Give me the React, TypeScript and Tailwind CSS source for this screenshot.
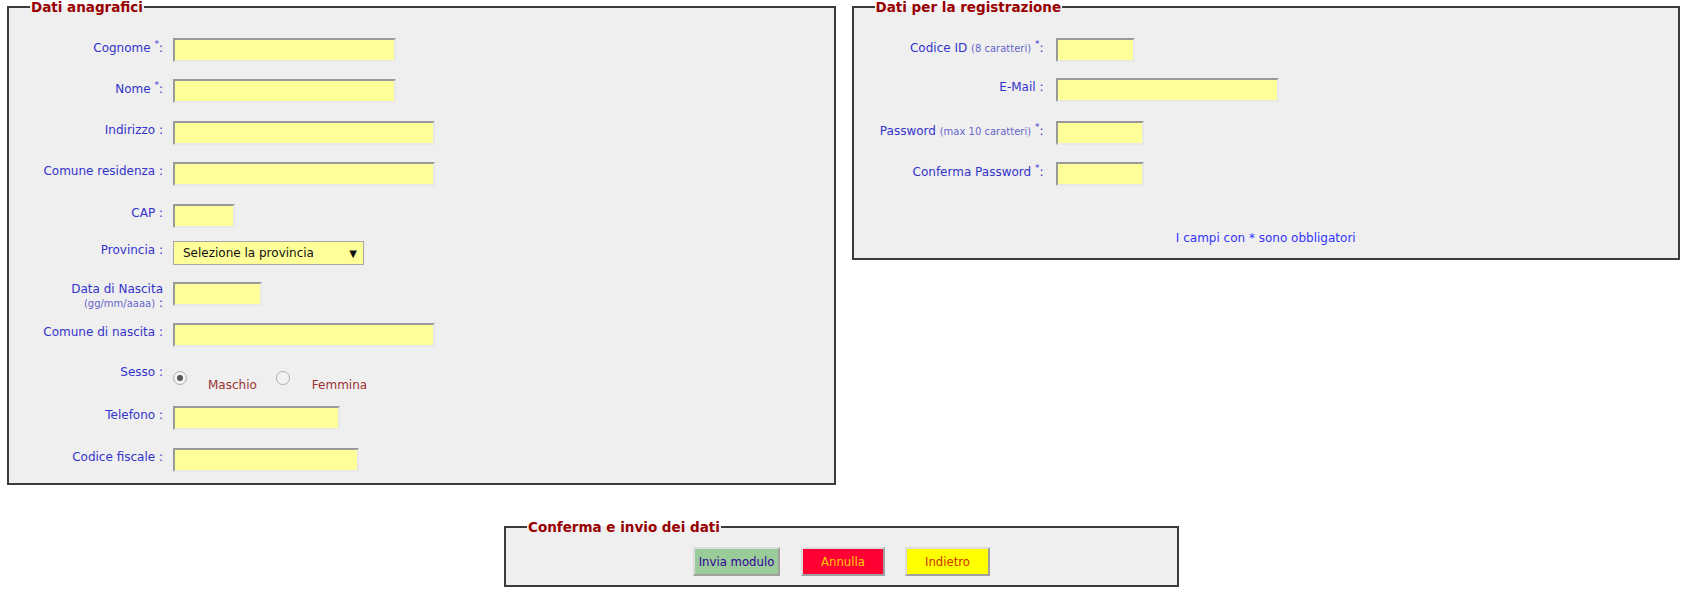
import React from 'react';

type RowProps = {
  h: string;
  lw: string;
  gap: string;
  lp?: string;
  label: React.ReactNode;
  children: React.ReactNode;
};

const Row = ({ h, lw, gap, lp = 'pt-[2px]', label, children }: RowProps) => (
  <div className={`flex items-start ${h}`}>
    <div className={`${lw} ${lp} shrink-0 text-right text-[12px] leading-[15px] text-[#3333cc]`}>{label}</div>
    <div className={gap}>{children}</div>
  </div>
);

const Star = () => <span className="align-super text-[9px] leading-none">*</span>;

const Small = ({ children }: { children: React.ReactNode }) => (
  <span className="text-[10px] text-[#6666cc]">{children}</span>
);

const Field = ({ w }: { w: string }) => (
  <input
    type="text"
    className={`${w} block h-[24px] border-2 border-t-[#999999] border-l-[#999999] border-r-[#e8e8e8] border-b-[#e8e8e8] bg-[#ffff99] outline-none`}
  />
);

const Radio = ({ checked, className = '' }: { checked?: boolean; className?: string }) => (
  <span
    className={`mt-[6px] flex h-[14px] w-[14px] shrink-0 items-center justify-center rounded-full border border-[#b0b0b0] bg-[#f2f2f2] ${className}`}
  >
    {checked && <span className="h-[6px] w-[6px] rounded-full bg-[#555555]" />}
  </span>
);

const Legend = ({ children }: { children: React.ReactNode }) => (
  <legend className="ml-[21px] px-[1px] text-[13.5px] font-bold leading-[14px] text-[#990000]">{children}</legend>
);

export default function App() {
  const L = 'w-[154px]';
  const G = 'ml-[10px]';
  const RL = 'w-[190px]';
  const RG = 'ml-[12px]';

  return (
    <div className="min-h-screen bg-white font-['DejaVu_Sans',Verdana,sans-serif]">
      <div className="grid grid-cols-2 items-start gap-[16px] pl-[7px] pr-[3px]">
        {/* dati anagrafici */}
        <fieldset className="border-2 border-[#3c3c3c] bg-[#efefef] pt-[24px] pb-[11px]">
          <Legend>Dati anagrafici</Legend>
          <Row h="h-[41px]" lw={L} gap={G} label={<>Cognome <Star />:</>}>
            <Field w="w-[223px]" />
          </Row>
          <Row h="h-[42px]" lw={L} gap={G} label={<>Nome <Star />:</>}>
            <Field w="w-[223px]" />
          </Row>
          <Row h="h-[41px]" lw={L} gap={G} label="Indirizzo :">
            <Field w="w-[262px]" />
          </Row>
          <Row h="h-[42px]" lw={L} gap={G} label="Comune residenza :">
            <Field w="w-[262px]" />
          </Row>
          <Row h="h-[37px]" lw={L} gap={G} label="CAP :">
            <Field w="w-[62px]" />
          </Row>
          <Row h="h-[41px]" lw={L} gap={G} label="Provincia :">
            <div className="flex h-[24px] w-[191px] items-center justify-between border border-[#a6a6a6] bg-[#ffff99] pl-[9px] pr-[6px] text-[12px] text-[#111111]">
              <span>Selezione la provincia</span>
              <span className="text-[10px]">▼</span>
            </div>
          </Row>
          <Row
            h="h-[41px]"
            lw={L}
            gap={G}
            lp="pt-0"
            label={
              <>
                <span className="block leading-[14px]">Data di Nascita</span>
                <span className="block leading-[14px]">
                  <Small>(gg/mm/aaaa)</Small> :
                </span>
              </>
            }
          >
            <Field w="w-[89px]" />
          </Row>
          <Row h="h-[42px]" lw={L} gap={G} label="Comune di nascita :">
            <Field w="w-[262px]" />
          </Row>
          <Row h="h-[41px]" lw={L} gap={G} lp="pt-0" label="Sesso :">
            <div className="flex items-start text-[12px] leading-[15px] text-[#993333]">
              <Radio checked />
              <span className="ml-[21px] mt-[13px]">Maschio</span>
              <Radio className="ml-[19px]" />
              <span className="ml-[22px] mt-[13px]">Femmina</span>
            </div>
          </Row>
          <Row h="h-[42px]" lw={L} gap={G} label="Telefono :">
            <Field w="w-[167px]" />
          </Row>
          <Row h="h-[24px]" lw={L} gap={G} label="Codice fiscale :">
            <Field w="w-[186px]" />
          </Row>
        </fieldset>

        {/* dati registrazione */}
        <fieldset className="border-2 border-[#3c3c3c] bg-[#efefef] pt-[24px] pb-[12px]">
          <Legend>Dati per la registrazione</Legend>
          <Row h="h-[40px]" lw={RL} gap={RG} label={<>Codice ID <Small>(8 caratteri)</Small> <Star />:</>}>
            <Field w="w-[79px]" />
          </Row>
          <Row h="h-[43px]" lw={RL} gap={RG} label="E-Mail :">
            <Field w="w-[223px]" />
          </Row>
          <Row h="h-[41px]" lw={RL} gap={RG} label={<>Password <Small>(max 10 caratteri)</Small> <Star />:</>}>
            <Field w="w-[88px]" />
          </Row>
          <Row h="h-[24px]" lw={RL} gap={RG} label={<>Conferma Password <Star />:</>}>
            <Field w="w-[88px]" />
          </Row>
          <p className="mt-[45px] text-center text-[12px] leading-[15px] text-[#3333ff]">I campi con * sono obbligatori</p>
        </fieldset>
      </div>

      {/* conferma */}
      <fieldset className="mx-auto mt-[35px] w-[675px] border-2 border-[#3c3c3c] bg-[#efefef] pt-[13px] pb-[9px]">
        <Legend>Conferma e invio dei dati</Legend>
        <div className="flex justify-center whitespace-nowrap font-['DejaVu_Sans_Condensed',sans-serif] text-[13px]">
          <button className="h-[29px] w-[87px] border-2 border-t-[#dcdcdc] border-l-[#dcdcdc] border-r-[#a0a0a0] border-b-[#a0a0a0] bg-[#99cc99] px-0 text-[#330099]">
            Invia modulo
          </button>
          <button className="ml-[21px] h-[29px] w-[84px] border-2 border-t-[#dcdcdc] border-l-[#dcdcdc] border-r-[#a0a0a0] border-b-[#a0a0a0] bg-[#ff0033] px-0 text-[#ffcc00]">
            Annulla
          </button>
          <button className="ml-[20px] h-[29px] w-[85px] border-2 border-t-[#dcdcdc] border-l-[#dcdcdc] border-r-[#a0a0a0] border-b-[#a0a0a0] bg-[#ffff00] px-0 text-[#cc3300]">
            Indietro
          </button>
        </div>
      </fieldset>
    </div>
  );
}
